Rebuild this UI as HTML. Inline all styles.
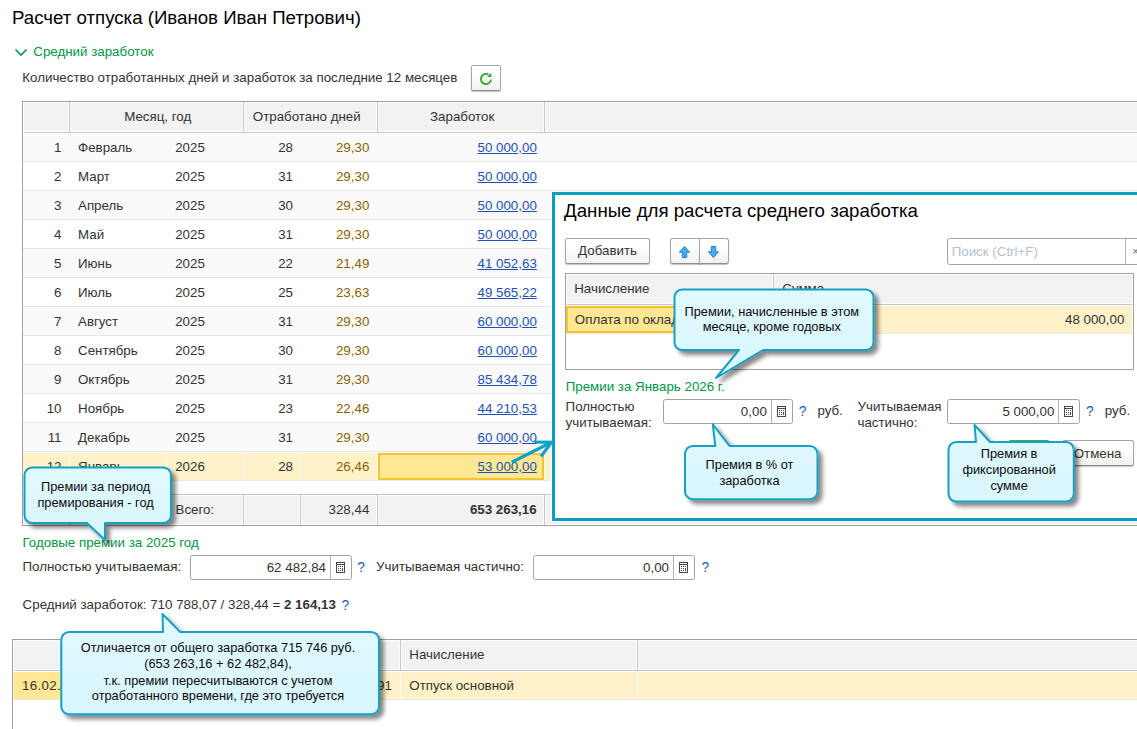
<!DOCTYPE html>
<html lang="ru"><head><meta charset="utf-8"><title>Расчет отпуска</title>
<style>
html,body{margin:0;padding:0;background:#fff;}
body{width:1137px;height:729px;overflow:hidden;position:relative;font-family:"Liberation Sans",sans-serif;font-size:13.33px;color:#333;}
div,.abs{position:absolute;box-sizing:border-box;}
.t{position:absolute;white-space:nowrap;line-height:16px;}
.t.c{font-size:12.8px;color:#0a0a0a;text-align:center;}
.btn{border:1px solid #a6a6a6;border-bottom-color:#8e8e8e;border-radius:2.5px;background:linear-gradient(#ffffff 35%,#f1f1f1);box-shadow:0 1px 1px rgba(0,0,0,0.25);overflow:hidden;}
.inp{border:1px solid #a4a4a4;border-radius:2.5px;background:#fff;}
.calc{position:absolute;left:0;top:0;}
</style></head><body>
<span class="t " style="top:7.43px;left:12.00px;font-size:18.67px;line-height:22px;color:#000;">Расчет отпуска (Иванов Иван Петрович)</span>
<svg class="abs" style="left:13.6px;top:47.4px" width="14" height="10" viewBox="0 0 14 10"><path d="M1.5 2.5 L7 8 L12.5 2.5" fill="none" stroke="#009646" stroke-width="1.6"/></svg>
<span class="t " style="top:43.98px;left:33.30px;color:#009646;">Средний заработок</span>
<span class="t " style="top:70.28px;left:22.30px;">Количество отработанных дней и заработок за последние 12 месяцев</span>
<div class="btn" style="left:471px;top:65px;width:30px;height:26px;border-radius:2px;"><svg width="28" height="24" viewBox="0 0 28 24" style="position:absolute;left:0;top:0"><path d="M19.05 13.7 A5.1 5.1 0 1 1 16.55 8.58" fill="none" stroke="#2ca52c" stroke-width="1.8"/><path d="M15.0 11.0 L19.3 11.0 L19.3 6.8 Z" fill="#2ca52c"/></svg></div>
<div class="" style="left:22px;top:101px;width:1200px;height:425px;border:1px solid #a0a0a0;background:#fff;"></div>
<div class="" style="left:23px;top:102px;width:1200px;height:31px;background:#f2f2f2;border:1px solid #fff;border-bottom:none;box-shadow:inset 0 -1px 0 #c6c6c6, inset 0 -2px 0 #fff;"></div>
<div class="" style="left:68px;top:102px;width:3px;height:30px;background:#c6c6c6;border-left:1px solid #fff;border-right:1px solid #fff;"></div>
<div class="" style="left:242px;top:102px;width:3px;height:30px;background:#c6c6c6;border-left:1px solid #fff;border-right:1px solid #fff;"></div>
<div class="" style="left:376px;top:102px;width:3px;height:30px;background:#c6c6c6;border-left:1px solid #fff;border-right:1px solid #fff;"></div>
<div class="" style="left:543px;top:102px;width:3px;height:30px;background:#c6c6c6;border-left:1px solid #fff;border-right:1px solid #fff;"></div>
<span class="t " style="top:109.28px;left:124.20px;">Месяц, год</span>
<span class="t " style="top:109.28px;left:252.80px;">Отработано дней</span>
<span class="t " style="top:109.28px;left:430.00px;">Заработок</span>
<div class="" style="left:23px;top:133px;width:1200px;height:29px;background:#fafafa;border-bottom:1px solid #e8e8e8;"></div>
<span class="t " style="top:139.78px;right:1075.50px;">1</span>
<span class="t " style="top:139.78px;left:78.00px;">Февраль</span>
<span class="t " style="top:139.78px;left:175.20px;">2025</span>
<span class="t " style="top:139.78px;right:844.00px;">28</span>
<span class="t " style="top:139.78px;right:767.70px;color:#8a6200;">29,30</span>
<span class="t " style="top:139.78px;right:600.20px;color:#2252b4;text-decoration:underline;">50 000,00</span>
<div class="" style="left:23px;top:162px;width:1200px;height:29px;background:#ffffff;border-bottom:1px solid #e8e8e8;"></div>
<span class="t " style="top:168.78px;right:1075.50px;">2</span>
<span class="t " style="top:168.78px;left:78.00px;">Март</span>
<span class="t " style="top:168.78px;left:175.20px;">2025</span>
<span class="t " style="top:168.78px;right:844.00px;">31</span>
<span class="t " style="top:168.78px;right:767.70px;color:#8a6200;">29,30</span>
<span class="t " style="top:168.78px;right:600.20px;color:#2252b4;text-decoration:underline;">50 000,00</span>
<div class="" style="left:23px;top:191px;width:1200px;height:29px;background:#fafafa;border-bottom:1px solid #e8e8e8;"></div>
<span class="t " style="top:197.78px;right:1075.50px;">3</span>
<span class="t " style="top:197.78px;left:78.00px;">Апрель</span>
<span class="t " style="top:197.78px;left:175.20px;">2025</span>
<span class="t " style="top:197.78px;right:844.00px;">30</span>
<span class="t " style="top:197.78px;right:767.70px;color:#8a6200;">29,30</span>
<span class="t " style="top:197.78px;right:600.20px;color:#2252b4;text-decoration:underline;">50 000,00</span>
<div class="" style="left:23px;top:220px;width:1200px;height:29px;background:#ffffff;border-bottom:1px solid #e8e8e8;"></div>
<span class="t " style="top:226.78px;right:1075.50px;">4</span>
<span class="t " style="top:226.78px;left:78.00px;">Май</span>
<span class="t " style="top:226.78px;left:175.20px;">2025</span>
<span class="t " style="top:226.78px;right:844.00px;">31</span>
<span class="t " style="top:226.78px;right:767.70px;color:#8a6200;">29,30</span>
<span class="t " style="top:226.78px;right:600.20px;color:#2252b4;text-decoration:underline;">50 000,00</span>
<div class="" style="left:23px;top:249px;width:1200px;height:29px;background:#fafafa;border-bottom:1px solid #e8e8e8;"></div>
<span class="t " style="top:255.78px;right:1075.50px;">5</span>
<span class="t " style="top:255.78px;left:78.00px;">Июнь</span>
<span class="t " style="top:255.78px;left:175.20px;">2025</span>
<span class="t " style="top:255.78px;right:844.00px;">22</span>
<span class="t " style="top:255.78px;right:767.70px;color:#8a6200;">21,49</span>
<span class="t " style="top:255.78px;right:600.20px;color:#2252b4;text-decoration:underline;">41 052,63</span>
<div class="" style="left:23px;top:278px;width:1200px;height:29px;background:#ffffff;border-bottom:1px solid #e8e8e8;"></div>
<span class="t " style="top:284.78px;right:1075.50px;">6</span>
<span class="t " style="top:284.78px;left:78.00px;">Июль</span>
<span class="t " style="top:284.78px;left:175.20px;">2025</span>
<span class="t " style="top:284.78px;right:844.00px;">25</span>
<span class="t " style="top:284.78px;right:767.70px;color:#8a6200;">23,63</span>
<span class="t " style="top:284.78px;right:600.20px;color:#2252b4;text-decoration:underline;">49 565,22</span>
<div class="" style="left:23px;top:307px;width:1200px;height:29px;background:#fafafa;border-bottom:1px solid #e8e8e8;"></div>
<span class="t " style="top:313.78px;right:1075.50px;">7</span>
<span class="t " style="top:313.78px;left:78.00px;">Август</span>
<span class="t " style="top:313.78px;left:175.20px;">2025</span>
<span class="t " style="top:313.78px;right:844.00px;">31</span>
<span class="t " style="top:313.78px;right:767.70px;color:#8a6200;">29,30</span>
<span class="t " style="top:313.78px;right:600.20px;color:#2252b4;text-decoration:underline;">60 000,00</span>
<div class="" style="left:23px;top:336px;width:1200px;height:29px;background:#ffffff;border-bottom:1px solid #e8e8e8;"></div>
<span class="t " style="top:342.78px;right:1075.50px;">8</span>
<span class="t " style="top:342.78px;left:78.00px;">Сентябрь</span>
<span class="t " style="top:342.78px;left:175.20px;">2025</span>
<span class="t " style="top:342.78px;right:844.00px;">30</span>
<span class="t " style="top:342.78px;right:767.70px;color:#8a6200;">29,30</span>
<span class="t " style="top:342.78px;right:600.20px;color:#2252b4;text-decoration:underline;">60 000,00</span>
<div class="" style="left:23px;top:365px;width:1200px;height:29px;background:#fafafa;border-bottom:1px solid #e8e8e8;"></div>
<span class="t " style="top:371.78px;right:1075.50px;">9</span>
<span class="t " style="top:371.78px;left:78.00px;">Октябрь</span>
<span class="t " style="top:371.78px;left:175.20px;">2025</span>
<span class="t " style="top:371.78px;right:844.00px;">31</span>
<span class="t " style="top:371.78px;right:767.70px;color:#8a6200;">29,30</span>
<span class="t " style="top:371.78px;right:600.20px;color:#2252b4;text-decoration:underline;">85 434,78</span>
<div class="" style="left:23px;top:394px;width:1200px;height:29px;background:#ffffff;border-bottom:1px solid #e8e8e8;"></div>
<span class="t " style="top:400.78px;right:1075.50px;">10</span>
<span class="t " style="top:400.78px;left:78.00px;">Ноябрь</span>
<span class="t " style="top:400.78px;left:175.20px;">2025</span>
<span class="t " style="top:400.78px;right:844.00px;">23</span>
<span class="t " style="top:400.78px;right:767.70px;color:#8a6200;">22,46</span>
<span class="t " style="top:400.78px;right:600.20px;color:#2252b4;text-decoration:underline;">44 210,53</span>
<div class="" style="left:23px;top:423px;width:1200px;height:29px;background:#fafafa;border-bottom:1px solid #e8e8e8;"></div>
<span class="t " style="top:429.78px;right:1075.50px;">11</span>
<span class="t " style="top:429.78px;left:78.00px;">Декабрь</span>
<span class="t " style="top:429.78px;left:175.20px;">2025</span>
<span class="t " style="top:429.78px;right:844.00px;">31</span>
<span class="t " style="top:429.78px;right:767.70px;color:#8a6200;">29,30</span>
<span class="t " style="top:429.78px;right:600.20px;color:#2252b4;text-decoration:underline;">60 000,00</span>
<div class="" style="left:23px;top:452px;width:1200px;height:29px;background:#fff2c9;border-bottom:1px solid #e8e8e8;border-top:1px solid #fff;"></div>
<div class="" style="left:69px;top:452px;width:1px;height:28px;background:#fff;"></div>
<div class="" style="left:166px;top:452px;width:1px;height:28px;background:#fff;"></div>
<div class="" style="left:243px;top:452px;width:1px;height:28px;background:#fff;"></div>
<div class="" style="left:300px;top:452px;width:1px;height:28px;background:#fff;"></div>
<div class="" style="left:377px;top:452px;width:1px;height:28px;background:#fff;"></div>
<div class="" style="left:544px;top:452px;width:1px;height:28px;background:#fff;"></div>
<div class="" style="left:378px;top:453px;width:166px;height:27px;background:#ffe793;border:2px solid #f7c331;"></div>
<span class="t " style="top:458.78px;right:1075.50px;">12</span>
<span class="t " style="top:458.78px;left:78.00px;">Январь</span>
<span class="t " style="top:458.78px;left:175.20px;">2026</span>
<span class="t " style="top:458.78px;right:844.00px;">28</span>
<span class="t " style="top:458.78px;right:767.70px;color:#8a6200;">26,46</span>
<span class="t " style="top:458.78px;right:600.20px;color:#2252b4;text-decoration:underline;">53 000,00</span>
<div class="" style="left:23px;top:494px;width:1200px;height:31px;background:#f2f2f2;border-top:1px solid #c0c0c0;box-shadow:inset 0 0 0 1px #fff;"></div>
<div class="" style="left:68px;top:495px;width:3px;height:30px;background:#c6c6c6;border-left:1px solid #fff;border-right:1px solid #fff;"></div>
<div class="" style="left:242px;top:495px;width:3px;height:30px;background:#c6c6c6;border-left:1px solid #fff;border-right:1px solid #fff;"></div>
<div class="" style="left:299px;top:495px;width:3px;height:30px;background:#c6c6c6;border-left:1px solid #fff;border-right:1px solid #fff;"></div>
<div class="" style="left:376px;top:495px;width:3px;height:30px;background:#c6c6c6;border-left:1px solid #fff;border-right:1px solid #fff;"></div>
<div class="" style="left:543px;top:495px;width:3px;height:30px;background:#c6c6c6;border-left:1px solid #fff;border-right:1px solid #fff;"></div>
<span class="t " style="top:502.08px;left:175.50px;">Всего:</span>
<span class="t " style="top:502.08px;right:767.70px;">328,44</span>
<span class="t " style="top:502.08px;right:600.40px;font-weight:bold;">653 263,16</span>
<span class="t " style="top:535.08px;left:22.50px;color:#009646;">Годовые премии за 2025 год</span>
<span class="t " style="top:558.98px;left:22.50px;">Полностью учитываемая:</span>
<div class="inp" style="left:190px;top:555px;width:162px;height:25px;"></div>
<div class="" style="left:330px;top:556px;width:1px;height:23px;background:#b0b0b0;"></div>
<div style="left:336px;top:562px;width:9px;height:11px"><svg class="calc" width="9" height="11" viewBox="0 0 9 11"><rect x="0.5" y="0.5" width="8" height="10" fill="#fff" stroke="#484848" stroke-width="1"/><path d="M0.5 2.5 H8.5" stroke="#484848" stroke-width="1"/><g fill="#484848"><rect x="2" y="4" width="1" height="1"/><rect x="4" y="4" width="1" height="1"/><rect x="6" y="4" width="1" height="1"/><rect x="2" y="6" width="1" height="1"/><rect x="4" y="6" width="1" height="1"/><rect x="6" y="6" width="1" height="3"/><rect x="2" y="8" width="1" height="1"/><rect x="4" y="8" width="1" height="1"/></g></svg></div>
<span class="t " style="top:559.88px;right:811.00px;">62 482,84</span>
<span class="t " style="top:559.72px;left:357.30px;font-size:13.8px;color:#1763be;">?</span>
<span class="t " style="top:558.98px;left:376.10px;">Учитываемая частично:</span>
<div class="inp" style="left:533px;top:555px;width:162px;height:25px;"></div>
<div class="" style="left:673px;top:556px;width:1px;height:23px;background:#b0b0b0;"></div>
<div style="left:679px;top:562px;width:9px;height:11px"><svg class="calc" width="9" height="11" viewBox="0 0 9 11"><rect x="0.5" y="0.5" width="8" height="10" fill="#fff" stroke="#484848" stroke-width="1"/><path d="M0.5 2.5 H8.5" stroke="#484848" stroke-width="1"/><g fill="#484848"><rect x="2" y="4" width="1" height="1"/><rect x="4" y="4" width="1" height="1"/><rect x="6" y="4" width="1" height="1"/><rect x="2" y="6" width="1" height="1"/><rect x="4" y="6" width="1" height="1"/><rect x="6" y="6" width="1" height="3"/><rect x="2" y="8" width="1" height="1"/><rect x="4" y="8" width="1" height="1"/></g></svg></div>
<span class="t " style="top:559.88px;right:468.00px;">0,00</span>
<span class="t " style="top:559.72px;left:701.60px;font-size:13.8px;color:#1763be;">?</span>
<span class="t " style="top:596.98px;left:22.60px;">Средний заработок: 710 788,07 / 328,44 = <b>2 164,13</b></span>
<span class="t " style="top:598.12px;left:341.50px;font-size:13.8px;color:#1763be;">?</span>
<div class="" style="left:12px;top:639px;width:1200px;height:100px;border:1px solid #a0a0a0;border-bottom:none;background:#fff;"></div>
<div class="" style="left:13px;top:640px;width:1200px;height:31px;background:#f2f2f2;border:1px solid #fff;border-bottom:none;box-shadow:inset 0 -1px 0 #c6c6c6, inset 0 -2px 0 #fff;"></div>
<div class="" style="left:399px;top:640px;width:3px;height:30px;background:#c6c6c6;border-left:1px solid #fff;border-right:1px solid #fff;"></div>
<div class="" style="left:636px;top:640px;width:3px;height:30px;background:#c6c6c6;border-left:1px solid #fff;border-right:1px solid #fff;"></div>
<div class="" style="left:13px;top:671px;width:1200px;height:29px;background:#fff2c9;border-top:1px solid #fff;border-bottom:1px solid #e8e8e8;"></div>
<div class="" style="left:14px;top:672px;width:90px;height:27px;background:#ffe793;"></div>
<div class="" style="left:400px;top:672px;width:1px;height:27px;background:#fff;"></div>
<div class="" style="left:637px;top:672px;width:1px;height:27px;background:#fff;"></div>
<span class="t " style="top:646.98px;left:409.30px;">Начисление</span>
<span class="t " style="top:677.98px;left:22.10px;letter-spacing:0.3px;">16.02.2026</span>
<span class="t " style="top:677.98px;right:745.20px;">91</span>
<span class="t " style="top:677.98px;left:409.30px;">Отпуск основной</span>
<div class="" style="left:552px;top:192px;width:700px;height:329px;border:3px solid #0a9ec1;background:#fff;box-shadow:0 0 0 1px #fff;"></div>
<span class="t " style="top:200.33px;left:564.10px;font-size:18.67px;line-height:22px;color:#000;">Данные для расчета среднего заработка</span>
<div class="btn" style="left:565px;top:238px;width:85px;height:26px;"></div>
<span class="t " style="top:243.38px;left:578.10px;">Добавить</span>
<div class="btn" style="left:670px;top:238px;width:30px;height:26px;border-radius:3px 0 0 3px;"><svg width="28" height="24" viewBox="0 0 28 24" style="position:absolute;left:0;top:0"><path d="M13.5 7.5 L18.6 13.2 H15.7 V18.5 H11.3 V13.2 H8.4 Z" fill="#45abf2" stroke="#2482c6" stroke-width="1"/></svg></div>
<div class="btn" style="left:699px;top:238px;width:30px;height:26px;border-radius:0 3px 3px 0;"><svg width="28" height="24" viewBox="0 0 28 24" style="position:absolute;left:0;top:0"><path d="M13.5 18.5 L18.6 12.8 H15.7 V7.5 H11.3 V12.8 H8.4 Z" fill="#45abf2" stroke="#2482c6" stroke-width="1"/></svg></div>
<div class="inp" style="left:947px;top:238px;width:200px;height:27px;"></div>
<div class="" style="left:1125px;top:239px;width:1px;height:25px;background:#b0b0b0;"></div>
<span class="t " style="top:243.78px;left:951.70px;color:#b6c1cb;">Поиск (Ctrl+F)</span>
<span class="t " style="top:243.29px;left:1132.20px;font-size:11px;color:#666;">×</span>
<div class="" style="left:565px;top:273px;width:569px;height:97px;border:1px solid #a0a0a0;background:#fff;"></div>
<div class="" style="left:566px;top:274px;width:567px;height:31px;background:#f2f2f2;border:1px solid #fff;border-bottom:none;box-shadow:inset 0 -1px 0 #c6c6c6, inset 0 -2px 0 #fff;"></div>
<div class="" style="left:772px;top:274px;width:3px;height:30px;background:#c6c6c6;border-left:1px solid #fff;border-right:1px solid #fff;"></div>
<span class="t " style="top:280.98px;left:574.20px;">Начисление</span>
<span class="t " style="top:280.98px;left:782.30px;">Сумма</span>
<div class="" style="left:566px;top:305px;width:567px;height:29px;background:#fff2c9;border:1px solid #fff;border-bottom:1px solid #e8e8e8;"></div>
<div class="" style="left:566px;top:306px;width:207px;height:27px;background:#ffe793;border:2px solid #f7c331;"></div>
<span class="t " style="top:312.38px;left:574.80px;">Оплата по окладу</span>
<span class="t " style="top:312.38px;right:12.70px;">48 000,00</span>
<span class="t " style="top:379.28px;left:565.70px;color:#009646;">Премии за Январь 2026 г.</span>
<span class="t " style="top:399.18px;left:565.60px;">Полностью</span>
<span class="t " style="top:415.18px;left:565.60px;">учитываемая:</span>
<div class="inp" style="left:663px;top:399px;width:130px;height:25px;"></div>
<div class="" style="left:771px;top:400px;width:1px;height:23px;background:#b0b0b0;"></div>
<div style="left:777px;top:406px;width:9px;height:11px"><svg class="calc" width="9" height="11" viewBox="0 0 9 11"><rect x="0.5" y="0.5" width="8" height="10" fill="#fff" stroke="#484848" stroke-width="1"/><path d="M0.5 2.5 H8.5" stroke="#484848" stroke-width="1"/><g fill="#484848"><rect x="2" y="4" width="1" height="1"/><rect x="4" y="4" width="1" height="1"/><rect x="6" y="4" width="1" height="1"/><rect x="2" y="6" width="1" height="1"/><rect x="4" y="6" width="1" height="1"/><rect x="6" y="6" width="1" height="3"/><rect x="2" y="8" width="1" height="1"/><rect x="4" y="8" width="1" height="1"/></g></svg></div>
<span class="t " style="top:403.78px;right:370.20px;">0,00</span>
<span class="t " style="top:404.02px;left:798.70px;font-size:13.8px;color:#1763be;">?</span>
<span class="t " style="top:403.48px;left:817.40px;">руб.</span>
<span class="t " style="top:399.18px;left:857.50px;">Учитываемая</span>
<span class="t " style="top:415.18px;left:857.50px;">частично:</span>
<div class="inp" style="left:947px;top:399px;width:133px;height:25px;"></div>
<div class="" style="left:1058px;top:400px;width:1px;height:23px;background:#b0b0b0;"></div>
<div style="left:1064px;top:406px;width:9px;height:11px"><svg class="calc" width="9" height="11" viewBox="0 0 9 11"><rect x="0.5" y="0.5" width="8" height="10" fill="#fff" stroke="#484848" stroke-width="1"/><path d="M0.5 2.5 H8.5" stroke="#484848" stroke-width="1"/><g fill="#484848"><rect x="2" y="4" width="1" height="1"/><rect x="4" y="4" width="1" height="1"/><rect x="6" y="4" width="1" height="1"/><rect x="2" y="6" width="1" height="1"/><rect x="4" y="6" width="1" height="1"/><rect x="6" y="6" width="1" height="3"/><rect x="2" y="8" width="1" height="1"/><rect x="4" y="8" width="1" height="1"/></g></svg></div>
<span class="t " style="top:403.78px;right:82.70px;">5 000,00</span>
<span class="t " style="top:404.02px;left:1085.90px;font-size:13.8px;color:#1763be;">?</span>
<span class="t " style="top:403.48px;left:1104.80px;">руб.</span>
<div class="" style="left:1008px;top:440px;width:42px;height:26px;background:#2db14a;border-radius:3px;"></div>
<div class="btn" style="left:1062px;top:440px;width:72px;height:26px;"></div>
<span class="t " style="top:445.88px;left:1073.70px;">Отмена</span>
<svg class="abs" style="left:0;top:0;pointer-events:none" width="1137" height="729" viewBox="0 0 1137 729">
<defs><linearGradient id="cg" x1="0" y1="0" x2="0" y2="1"><stop offset="0" stop-color="#e0f9ff"/><stop offset="1" stop-color="#d9f6fe"/></linearGradient>
<filter id="sh" x="-10%" y="-30%" width="125%" height="170%"><feDropShadow dx="4" dy="4" stdDeviation="2.3" flood-color="#000" flood-opacity="0.47"/></filter></defs>
<g fill="none" stroke="#12a2c3" stroke-width="3.2" stroke-linecap="butt"><path d="M511.8 462.3 L549.5 443.2"/><path d="M534 442 L551.5 442.3 L541 456.5"/></g>
<path d="M682.3 289.5 L865.7 289.5 A7.8 7.8 0 0 1 873.5 297.3 L873.5 342.2 A7.8 7.8 0 0 1 865.7 350 L763 350 L716 378 L739 350 L682.3 350 A7.8 7.8 0 0 1 674.5 342.2 L674.5 297.3 A7.8 7.8 0 0 1 682.3 289.5 Z" fill="url(#cg)" stroke="#12a1c3" stroke-width="2" stroke-linejoin="round" filter="url(#sh)"/>
<path d="M32.3 467.5 L163.2 467.5 A7.8 7.8 0 0 1 171 475.3 L171 515.2 A7.8 7.8 0 0 1 163.2 523 L105 523 L105 540 L87 523 L32.3 523 A7.8 7.8 0 0 1 24.5 515.2 L24.5 475.3 A7.8 7.8 0 0 1 32.3 467.5 Z" fill="url(#cg)" stroke="#12a1c3" stroke-width="2" stroke-linejoin="round" filter="url(#sh)"/>
<path d="M69.1 631.9 L163 631.9 L162.5 614 L180 631.9 L371.2 631.9 A7.8 7.8 0 0 1 379 639.6999999999999 L379 706.4000000000001 A7.8 7.8 0 0 1 371.2 714.2 L69.1 714.2 A7.8 7.8 0 0 1 61.3 706.4000000000001 L61.3 639.6999999999999 A7.8 7.8 0 0 1 69.1 631.9 Z" fill="url(#cg)" stroke="#12a1c3" stroke-width="2" stroke-linejoin="round" filter="url(#sh)"/>
<path d="M692.8 446 L715.3 446 L712.8 424.3 L729.5 446 L809.7 446 A7.8 7.8 0 0 1 817.5 453.8 L817.5 491.4 A7.8 7.8 0 0 1 809.7 499.2 L692.8 499.2 A7.8 7.8 0 0 1 685 491.4 L685 453.8 A7.8 7.8 0 0 1 692.8 446 Z" fill="url(#cg)" stroke="#12a1c3" stroke-width="2" stroke-linejoin="round" filter="url(#sh)"/>
<path d="M956.3 442 L976 442 L974.5 425 L990 442 L1066.0 442 A7.8 7.8 0 0 1 1073.8 449.8 L1073.8 493.7 A7.8 7.8 0 0 1 1066.0 501.5 L956.3 501.5 A7.8 7.8 0 0 1 948.5 493.7 L948.5 449.8 A7.8 7.8 0 0 1 956.3 442 Z" fill="url(#cg)" stroke="#12a1c3" stroke-width="2" stroke-linejoin="round" filter="url(#sh)"/>
</svg>
<span class="t c" style="left:571.80px;width:400px;top:303.76px;">Премии, начисленные в этом</span>
<span class="t c" style="left:571.80px;width:400px;top:319.46px;">месяце, кроме годовых</span>
<span class="t c" style="left:-104.40px;width:400px;top:478.96px;">Премии за период</span>
<span class="t c" style="left:-104.40px;width:400px;top:494.76px;">премирования - год</span>
<span class="t c" style="left:18.00px;width:400px;top:640.16px;">Отличается от общего заработка 715 746 руб.</span>
<span class="t c" style="left:18.00px;width:400px;top:655.96px;">(653 263,16 + 62 482,84),</span>
<span class="t c" style="left:18.00px;width:400px;top:672.56px;">т.к. премии пересчитываются с учетом</span>
<span class="t c" style="left:18.00px;width:400px;top:688.16px;">отработанного времени, где это требуется</span>
<span class="t c" style="left:549.50px;width:400px;top:456.86px;">Премия в % от</span>
<span class="t c" style="left:549.50px;width:400px;top:472.66px;">заработка</span>
<span class="t c" style="left:809.10px;width:400px;top:446.16px;">Премия в</span>
<span class="t c" style="left:809.10px;width:400px;top:462.36px;">фиксированной</span>
<span class="t c" style="left:809.10px;width:400px;top:478.36px;">сумме</span>
</body></html>
